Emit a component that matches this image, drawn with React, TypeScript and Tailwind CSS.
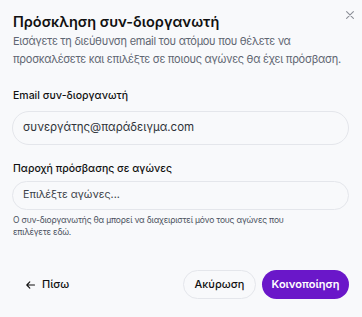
import React from "react";

export default function App() {
  return (
    <div className="w-[362px] h-[317px] bg-[#f8f9fb] relative text-[#111827] px-[13px] pt-[12.5px]" style={{ fontFamily: "Inter, 'Noto Sans', sans-serif" }}>
      <button className="absolute left-[346px] top-[11px] w-[8px] h-[8px] text-[#8b8f97]">
        <svg width="8" height="8" viewBox="0 0 8 8" fill="none" stroke="currentColor" strokeWidth="1.1" strokeLinecap="round" className="block"><path d="M0.6 0.6L7.4 7.4M7.4 0.6L0.6 7.4"/></svg>
      </button>
      <h2 className="text-[14.5px] font-semibold leading-[18px] text-[#111]">Πρόσκληση συν-διοργανωτή</h2>
      <p className="mt-[1.5px] text-[11px] leading-[18px] tracking-[-0.28px] text-[#5f6672]">Εισάγετε τη διεύθυνση email του ατόμου που θέλετε να προσκαλέσετε και επιλέξτε σε ποιους αγώνες θα έχει πρόσβαση.</p>
      <label className="block mt-[21px] text-[10.5px] font-medium leading-[14px] text-[#111]">Email συν-διοργανωτή</label>
      <div className="-ml-[1px] mt-[8px] h-[34px] rounded-full border border-[#e4e6eb] bg-[#f8f9fb] flex items-center px-[10px] text-[11.5px] text-[#2f3339]">συνεργάτης@παράδειγμα.com</div>
      <label className="block mt-[17px] text-[10.5px] font-medium leading-[14px] text-[#111]">Παροχή πρόσβασης σε αγώνες</label>
      <div className="-ml-[1px] mt-[5px] h-[29px] rounded-full border border-[#e4e6eb] bg-[#f8f9fb] flex items-center px-[10px] text-[10.7px] text-[#3a3f47]">Επιλέξτε αγώνες...</div>
      <p className="mt-[4px] text-[8.5px] leading-[12px] tracking-[-0.2px] text-[#4b5260] pr-[30px]">Ο συν-διοργανωτής θα μπορεί να διαχειριστεί μόνο τους αγώνες που επιλέγετε εδώ.</p>
      <div className="mt-[32px] flex items-center justify-between">
        <button className="flex items-center gap-[7px] pl-[13px] text-[11px] font-medium h-[29px] text-[#111]">
          <svg width="9" height="8" viewBox="0 0 9 8" fill="none" stroke="currentColor" strokeWidth="1.1" strokeLinecap="round" strokeLinejoin="round"><path d="M8.5 4H0.8M3.8 0.8L0.8 4l3 3.2"/></svg>
          Πίσω
        </button>
        <div className="flex items-center gap-[6px]">
          <button className="h-[29px] w-[73px] rounded-full border border-[#e4e6eb] bg-[#f8f9fb] text-[11px] font-medium text-[#111]">Ακύρωση</button>
          <button className="h-[29px] w-[87px] rounded-full bg-[#6a17c9] text-white text-[11px] font-semibold">Κοινοποίηση</button>
        </div>
      </div>
    </div>
  );
}
